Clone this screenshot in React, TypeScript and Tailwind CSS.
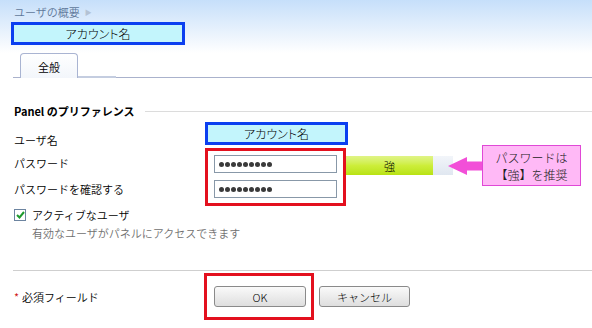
import React from "react";

const Dots = () => (
  <div className="flex items-center gap-[1px]">
    {Array.from({ length: 9 }).map((_, i) => (
      <div key={i} className="w-[5px] h-[5px] rounded-full bg-[#3a3a3a]" />
    ))}
  </div>
);

export default function App() {
  return (
    <div className="w-[592px] h-[328px] bg-white overflow-hidden text-[11px] leading-[14px] font-[350] text-black font-['Noto_Sans_CJK_JP','Noto_Sans',sans-serif]">
      {/* header */}
      <div className="h-[53px] bg-gradient-to-b from-[#c6dffa] via-[#eef5fd] via-70% to-white pt-[5px] pl-[11px]">
        <div className="flex items-center gap-[5px] pl-[3px] h-[13px] text-[#60789a]">
          <span>ユーザの概要</span>
          <span className="text-[7px] text-[#b4c2d4]">▶</span>
        </div>
        <div className="mt-[4px] w-[174px] h-[23px] border-[3px] border-[#0b3ff0] bg-[#c3f5fc] flex items-center justify-center text-[12px] font-light [font-feature-settings:'palt']">
          アカウント名
        </div>
      </div>

      {/* tabs */}
      <div className="h-[25px] flex items-end pl-[13px]">
        <div className="w-[7px] h-[1px] bg-[#aab2cc]" />
        <div className="w-[58px] h-[25px] rounded-t-[4px] border border-b-0 border-[#a9b4d2] bg-gradient-to-b from-white to-[#f3f6fb] flex items-center justify-center pt-[1px]">
          全般
        </div>
        <div className="w-[38px] h-[2px] bg-[#c4cde0]" />
        <div className="flex-1 h-[1px] bg-[#aab2cc]" />
      </div>

      {/* section heading */}
      <div className="mt-[26px] pl-[14px] flex items-center">
        <span className="font-bold">Panel のプリファレンス</span>
        <div className="flex-1 h-[1px] bg-[#dcdcdc] ml-[10px]" />
      </div>

      {/* form */}
      <div className="mt-[4px] flex">
        <div className="w-[205px] pl-[14px] flex flex-col">
          <div className="mt-[11px]">ユーザ名</div>
          <div className="mt-[9px]">パスワード</div>
          <div className="mt-[12px]">パスワードを確認する</div>
        </div>
        <div className="flex flex-col">
          <div className="w-[143px] h-[23px] border-[3px] border-[#0b3ff0] bg-[#c3f5fc] flex items-center justify-center text-[12px] font-light [font-feature-settings:'palt']">
            アカウント名
          </div>
          <div className="mt-[3px] flex items-start">
            <div className="w-[141px] h-[58px] border-[3px] border-[#e3101e] pl-[6px] pt-[4px] flex flex-col gap-[7px]">
              <div className="w-[123px] h-[18px] border border-[#8898a8] bg-white flex items-center pl-[4px]">
                <Dots />
              </div>
              <div className="w-[123px] h-[18px] border border-[#8898a8] bg-white flex items-center pl-[4px]">
                <Dots />
              </div>
            </div>
            <div className="mt-[8px] flex items-center">
              <div className="w-[87px] h-[19px] bg-gradient-to-b from-[#e0f486] via-[#cdee3a] to-[#b8e210] flex items-center justify-center font-light">
                強
              </div>
              <div className="w-[20px] h-[19px] bg-gradient-to-b from-[#f2f5fa] to-[#e0e7f0]" />
            </div>
            <svg width="36" height="20" viewBox="0 0 36 20" className="ml-[-5px] mt-[8px]">
              <polygon points="0,10 19,1 19,5.5 36,5.5 36,14.5 19,14.5 19,19" fill="#f24fd8" />
            </svg>
            <div className="ml-[-2px] mt-[-3px] w-[99px] h-[41px] border border-[#e048d6] bg-[#ffb9f6] flex flex-col items-center justify-center text-[12px] leading-[17px] font-light text-[#222]">
              <span>パスワードは</span>
              <span>【強】を推奨</span>
            </div>
          </div>
        </div>
      </div>

      {/* active user */}
      <div className="mt-[3px] pl-[14px] flex items-center gap-[6px] h-[12px]">
        <div className="w-[12px] h-[12px] border border-[#6c84a0] bg-white flex items-center justify-center">
          <svg width="9" height="8" viewBox="0 0 9 8">
            <path d="M1 4 L3.5 6.5 L8 1" stroke="#1e9a2e" strokeWidth="2" fill="none" />
          </svg>
        </div>
        <span>アクティブなユーザ</span>
      </div>
      <div className="mt-[5px] pl-[32px] text-[#707070]">有効なユーザがパネルにアクセスできます</div>

      {/* bottom line */}
      <div className="mt-[30px] ml-[13px] h-[1px] bg-[#cfcfcf]" />

      {/* footer */}
      <div className="mt-[2px] flex items-center">
        <div className="w-[204px] pl-[14px] flex items-center gap-[3px]">
          <span className="text-[#d01818]">*</span>
          <span>必須フィールド</span>
        </div>
        <div className="border-[3px] border-[#e3101e] pl-[7px] pr-[5px] py-[10px]">
          <button className="w-[92px] h-[21px] rounded-[3px] border border-[#8a8a8a] bg-gradient-to-b from-[#fafafa] to-[#dedede] flex items-center justify-center font-light">
            OK
          </button>
        </div>
        <button className="ml-[5px] w-[91px] h-[21px] rounded-[3px] border border-[#8a8a8a] bg-gradient-to-b from-[#fafafa] to-[#dedede] flex items-center justify-center font-light">
          キャンセル
        </button>
      </div>
    </div>
  );
}
